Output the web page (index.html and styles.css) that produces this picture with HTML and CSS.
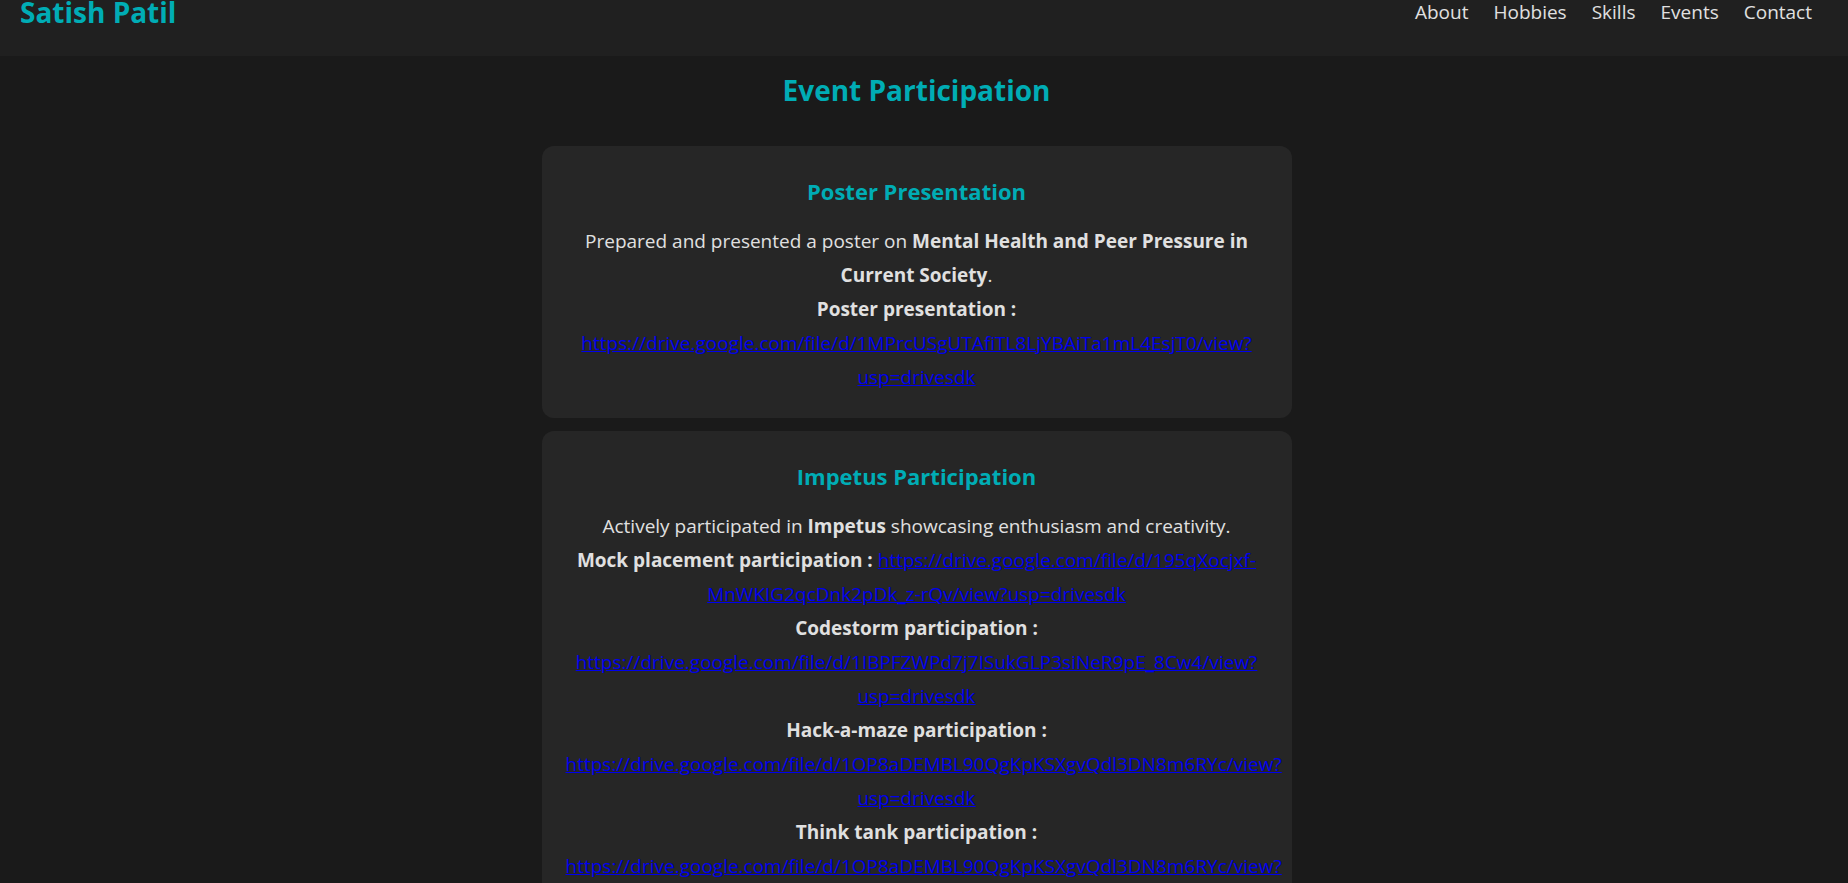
FILE: index.html
```html
<!DOCTYPE html>
<html lang="en">
<head>
<meta charset="utf-8">
<title>Satish Patil</title>
<link rel="stylesheet" href="styles.css">
</head>
<body>
<header class="site-header">
  <h1 class="logo">Satish Patil</h1>
  <nav class="nav">
    <a href="#about">About</a>
    <a href="#hobbies">Hobbies</a>
    <a href="#skills">Skills</a>
    <a href="#events">Events</a>
    <a href="#contact">Contact</a>
  </nav>
</header>
<main class="events" id="events">
  <h2 class="events-title">Event Participation</h2>
  <article class="card">
    <h3 class="card-title">Poster Presentation</h3>
    <p class="card-text">Prepared and presented a poster on <strong>Mental Health and Peer Pressure in<br>Current Society</strong>.<br>
      <strong>Poster presentation :</strong><br>
      <a href="#poster">https://drive.google.com/file/d/1MPrcUSgUTAfiTL8LjYBAiTa1mL4EsjT0/view?<br>usp=drivesdk</a></p>
  </article>
  <article class="card">
    <h3 class="card-title">Impetus Participation</h3>
    <p class="card-text">Actively participated in <strong>Impetus</strong> showcasing enthusiasm and creativity.<br>
      <strong>Mock placement participation :</strong> <a href="#mock">https://drive.google.com/file/d/195qXocjxf-<br>MnWKIG2qcDnk2pDk_z-rQv/view?usp=drivesdk</a><br>
      <strong>Codestorm participation :</strong><br>
      <a href="#codestorm">https://drive.google.com/file/d/1IBPFZWPd7j7ISukGLP3siNeR9pE_8Cw4/view?<br>usp=drivesdk</a><br>
      <strong>Hack-a-maze participation :</strong><br>
      <a href="#hackamaze">https://drive.google.com/file/d/1OP8aDEMBL90QgKpKSXgvQdl3DN8m6RYc/view?<br>usp=drivesdk</a><br>
      <strong>Think tank participation :</strong><br>
      <a href="#thinktank">https://drive.google.com/file/d/1OP8aDEMBL90QgKpKSXgvQdl3DN8m6RYc/view?<br>usp=drivesdk</a></p>
  </article>
</main>
</body>
</html>
```
FILE: styles.css
```css
* {
  box-sizing: border-box;
}

html {
  background: #1a1a1a;
  scrollbar-width: none;
}

body {
  margin: 0;
  color: #e0e0e0;
  font-family: "Segoe UI", "Open Sans", "Noto Sans", sans-serif;
  font-size: 19px;
  line-height: 34px;
}

.site-header {
  display: flex;
  justify-content: space-between;
  padding: 0 36px 32px 20px;
  background: #202020;
  line-height: 24px;
}

.logo {
  margin: 0;
  color: #00adb5;
  font-size: 28px;
  line-height: 24px;
}

.nav {
  display: flex;
  gap: 25px;
}

.nav a {
  color: #e0e0e0;
  text-decoration: none;
}

.events {
  display: flex;
  flex-direction: column;
  align-items: center;
  gap: 13px;
  padding: 10px 15px 24px 0;
  text-align: center;
}

.events-title {
  margin: 0 0 19px;
  color: #00adb5;
  font-size: 28px;
  line-height: 48px;
}

.card {
  width: 100%;
  max-width: 750px;
  padding: 24px;
  border-radius: 12px;
  background: #262626;
}

.card-title {
  margin: 0 0 12px;
  color: #00adb5;
  font-size: 22px;
  line-height: 42px;
}

.card-text {
  margin: 0;
  white-space: nowrap;
}

.card-text a {
  color: #0000ee;
}
```
